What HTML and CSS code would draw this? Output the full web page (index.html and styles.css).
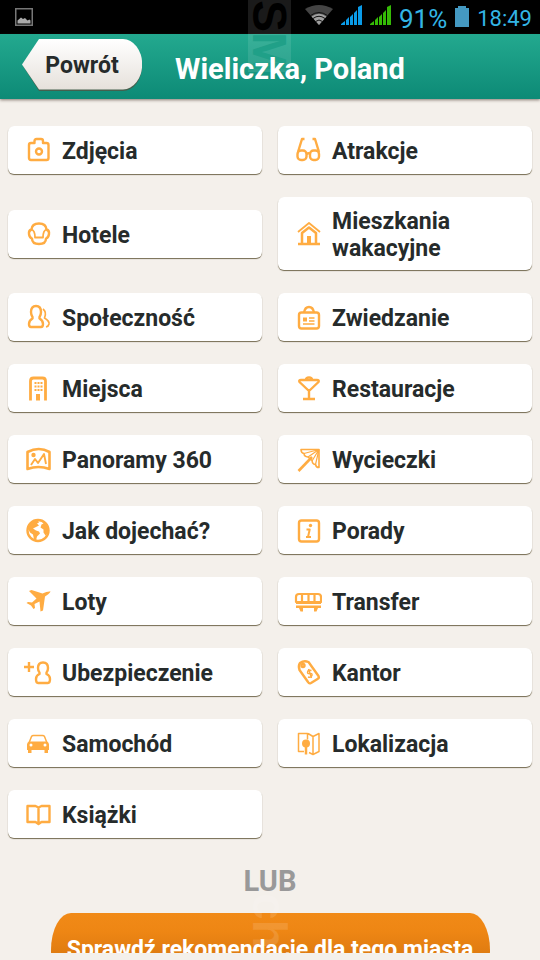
FILE: index.html
```html
<!DOCTYPE html>
<html lang="pl">
<head>
<meta charset="utf-8">
<meta name="viewport" content="width=device-width, initial-scale=1">
<title>Wieliczka, Poland</title>
<link rel="stylesheet" href="styles.css">
</head>
<body>
<div class="statusbar">
  <svg class="shot" width="18" height="18" viewBox="0 0 18 18"><rect x=".75" y=".75" width="16.500" height="16.500" fill="none" stroke="#777" stroke-width="1.500"/><path d="M2.500 15.500v-3l3.500-3 2 1.500 2-1 2.500 2.500 2-1 1 1v3z" fill="#aaa"/></svg>
  <div class="indicators">
    <svg class="wifi" width="28" height="20" viewBox="0 0 28 20"><path d="M0 4Q14-4 28 4L14 20z" fill="#444"/><path d="M6.500 11.500Q14 6 21.500 11.500L14 20z" fill="#a0a0a0"/><path d="M5.500 10.500Q14 4.500 22.500 10.500M8 13.500Q14 9 20 13.500M10.500 16.500Q14 13.500 17.500 16.500" fill="none" stroke="#111" stroke-width="1"/></svg>
    <svg class="signal blue" width="21" height="20" viewBox="0 0 21 20"><path d="M0 20v-1l4-3v4zM5 20v-5l3-3v8zM9 20v-8l3-3v11zM13 20V8l3-3v15zM17 20V2l4-2v20z"/></svg>
    <svg class="signal green" width="21" height="20" viewBox="0 0 21 20"><path d="M0 20v-1l4-3v4zM5 20v-5l3-3v8zM9 20v-8l3-3v11zM13 20V8l3-3v15zM17 20V2l4-2v20z"/></svg>
    <span class="percent">91%</span>
    <svg class="battery" width="14" height="21" viewBox="0 0 14 21"><path d="M0 2h3V0h8v2h3v19H0z" fill="#4499c2"/></svg>
    <span class="clock">18:49</span>
  </div>
</div>
<header class="topbar">
  <button class="back" type="button">
    <svg class="back-shape" viewBox="0 0 120 53" preserveAspectRatio="none" aria-hidden="true">
      <defs><linearGradient id="backfill" x2="0" y2="1"><stop offset="0" stop-color="#fff"/><stop offset="1" stop-color="#e6e1db"/></linearGradient></defs>
      <path d="M17 2h84a19 25 0 0 1 0 50H17L1 27z" fill="#45604e"/>
      <path d="M17 0h84a19 25 0 0 1 0 50.500H17L0 25.500z" fill="url(#backfill)"/>
    </svg>
    <span>Powrót</span>
  </button>
  <h1>Wieliczka, Poland</h1>
</header>
<main>
  <nav class="menu">
    <a class="card" href="#"><svg class="icon" viewBox="0 0 28 28"><path d="M7 7h3.500V5q0-2 2-2H17q2 0 2 2v2h3.500q2 0 2 2v13q0 2-2 2H7q-2 0-2-2V9q0-2 2-2z"/><circle cx="15" cy="15.500" r="3"/></svg>Zdjęcia</a>
    <a class="card" href="#"><svg class="icon" viewBox="0 0 28 28"><path d="M10.500 3H8L4 16M18.500 3H21l4 13"/><rect x="3.500" y="14.500" width="9" height="9.500" rx="3.500"/><rect x="16" y="14.500" width="9" height="9.500" rx="3.500"/><path d="M12.500 18q2-1.500 4 0"/></svg>Atrakcje</a>
    <a class="card" href="#"><svg class="icon" viewBox="0 0 28 28"><path d="M7.500 10.500Q8 4.500 15 4.500t7.500 6q3 1 2.500 4.500-.5 3.500-3 4.500 0 5.500-7 5.500t-7-5.500q-2.500-1-3-4.500-.5-3.500 2.500-4.500z"/><path d="M7.500 10.500q3.500 1 3.500 8h8q0-7 3.500-8" stroke-width="1.800"/></svg>Hotele</a>
    <a class="card" href="#"><svg class="icon" viewBox="0 0 28 28"><path d="M4 13L15 4l11 9" stroke-width="1.800"/><path d="M8 25V14l7-5.500 7 5.500v11M4 25h22" stroke-width="2.500"/><path d="M13 25v-8h4v8z" class="fill"/></svg>Mieszkania<br>wakacyjne</a>
    <a class="card" href="#"><svg class="icon" viewBox="0 0 28 28"><path d="M12 3q5 0 5 6 0 3-1.500 5v1.500q3.500 2 3.500 5.500 0 3-2 3H7q-2 0-2-3 0-3.500 3.500-5.500V14Q7 12 7 9q0-6 5-6z" stroke-width="2.400"/><path d="M19 6q4 3 1.500 9 5 3 4.500 6-.5 2.500-3 3" stroke-width="1.700"/></svg>Społeczność</a>
    <a class="card" href="#"><svg class="icon" viewBox="0 0 28 28"><rect x="5" y="9.500" width="20" height="16" rx="2.500"/><path d="M10 9.500q1-5.500 5-5.500t5 5.500"/><path d="M9 14.500h4v4H9z" class="fill"/><path d="M15 15h5.500M15 18h5.500M9 21h11.500" stroke-width="1.500"/></svg>Zwiedzanie</a>
    <a class="card" href="#"><svg class="icon" viewBox="0 0 28 28"><path d="M6.500 26.500V7q0-3 3-3h9q3 0 3 3v19.500" stroke-width="2.800"/><path d="M10.500 8h2v2h-2zm3 0h2v2h-2zm3 0h2v2h-2zm-6 3.500h2v2h-2zm3 0h2v2h-2zm3 0h2v2h-2zm-6 3.500h2v2h-2zm3 0h2v2h-2zm3 0h2v2h-2zM12 20h4v6.500h-4z" class="fill"/></svg>Miejsca</a>
    <a class="card" href="#"><svg class="icon" viewBox="0 0 28 28"><path d="M5.500 8L15 17l9.500-9q1-2-1.500-2H7Q4.500 6 5.500 8zM15 17v8M9 25h12"/><path d="M12 6q0-2.500 3-2.500T18 6"/></svg>Restauracje</a>
    <a class="card" href="#"><svg class="icon" viewBox="0 0 28 28"><path d="M3.500 7Q15 1 25.500 7v17q-11-4-22 0z" stroke-width="2.600"/><path d="M7 20l4-6 3 4 6-9 2 10" stroke-width="1.900"/><circle cx="9.500" cy="10" r="2.200" class="fill"/></svg>Panoramy 360</a>
    <a class="card" href="#"><svg class="icon" viewBox="0 0 28 28"><path d="M4.500 26L18 12" stroke-width="2.600"/><path d="M7 4.500h18v18q-3 0-3.500-3-3 0-3.500-4l-4-3.500q-4-.5-4-3.500Q7 8 7 4.500z" stroke-width="1.600"/><path d="M25 4.500L10 8.500M25 4.500L14 12M25 4.500L18 16M25 4.500l-3.500 15" stroke-width="1.200"/></svg>Wycieczki</a>
    <a class="card" href="#"><svg class="icon" viewBox="0 0 28 28"><circle cx="14" cy="14.500" r="10.500"/><path d="M5 8.500q4-4 9-4l1 2-2 1 2 2-4 2-2 1 3 2 3 1 1 2-3 3-1 4-2-1-1-5-3-2-2-4zM18 5.500l5 3 1.500 4-1 5-2 2-2-3v-3l-3-2 1-3 2-1z" class="fill"/></svg>Jak dojechać?</a>
    <a class="card" href="#"><svg class="icon" viewBox="0 0 28 28"><rect x="5" y="4.500" width="20" height="21" rx="2.500"/><circle cx="16.500" cy="9.500" r="1.700" class="fill"/><path d="M12.500 13.500h3.200l-1.700 7.500h3M12 21h2" stroke-width="2"/></svg>Porady</a>
    <a class="card" href="#"><svg class="icon" viewBox="0 0 28 28"><path d="M25.500 4.500q1.500-.8.500 1-1 1.500-5 4l-2 14-2.500 1-1-10-5 2.500.5 4-1.500 1-2.500-3.500L2.500 16l1.500-1 4 .5 4.500-4L5 4l2.500-1 11 3.500q4-2 7-2z" class="fill"/></svg>Loty</a>
    <a class="card" href="#"><svg class="icon" viewBox="0 0 28 28"><path d="M5 7h19q3 0 3 3v5H2v-5q0-3 3-3zM8 7v8M14.500 7v8M20.500 7v8" stroke-width="2.200"/><path d="M2 14h25v3H2zM2 18.500h25V21H2zM5 21h4v3.500H6.500zM20 21h4l-1.500 3.500H20z" class="fill"/></svg>Transfer</a>
    <a class="card" href="#"><svg class="icon" viewBox="0 0 28 28"><path d="M0 9h10M5 4v10M19 4.500q5 0 5 5.500 0 3-1.500 4.500V16q3.500 1.500 3.500 5 0 4-2 4H14q-2 0-2-4 0-3.500 3.500-5v-1.500Q14 13 14 10q0-5.500 5-5.500z"/></svg>Ubezpieczenie</a>
    <a class="card" href="#"><svg class="icon" viewBox="0 0 28 28"><path d="M6 5q4-3 8.500-1l10 14q1 2-1 3L17 25q-2 1-3-1L5.500 12Q4 8 6 5z" stroke-width="2.400"/><circle cx="9" cy="7.500" r="1.500"/><path d="M17.500 12.500q-4-1-4 2 0 1.500 2.500 1t2 2q-1 2.500-4 1.500M14.500 11l3 9" stroke-width="1.400"/></svg>Kantor</a>
    <a class="card" href="#"><svg class="icon" viewBox="0 0 28 28"><path d="M5 14L7.500 7.500q.5-1 2-1h9q1.500 0 2 1L23 14" stroke-width="1.500"/><path fill-rule="evenodd" d="M5 12.500h18q2 1 2 3V21h-1v3h-3.500v-3h-13v3H4v-3H3v-5.500q0-2 2-3zM5.500 16a1.500 1.500 0 1 0 3 0 1.500 1.500 0 0 0-3 0zm14 0a1.500 1.500 0 1 0 3 0 1.500 1.500 0 0 0-3 0z" class="fill"/></svg>Samochód</a>
    <a class="card" href="#"><svg class="icon" viewBox="0 0 28 28"><path d="M10 22.500H4.500V4.500h9v6M14 4.500l5 3 6-3v18l-6 3-4-2M19 7.500v18" stroke-width="1.500"/><circle cx="12" cy="14.500" r="4" class="fill"/><path d="M12 17v8.500" stroke-width="2.500"/></svg>Lokalizacja</a>
    <a class="card" href="#"><svg class="icon" viewBox="0 0 28 28"><path d="M3.500 6h8l3 1.500 3-1.500h8v16h-8l-3 2-3-2h-8zM14.500 7v16"/></svg>Książki</a>
  </nav>
  <p class="or">LUB</p>
  <button class="recommend" type="button">Sprawdź rekomendacje dla tego miasta</button>
</main>
<div class="mark mark-top" aria-hidden="true"><span class="mark-s">S</span><span class="mark-m">M</span></div>
<div class="mark mark-bottom" aria-hidden="true">ch</div>
</body>
</html>
```
FILE: styles.css
```css
* { box-sizing: border-box; }

body {
  margin: 0;
  height: 100vh;
  padding-bottom: 7px;
  display: flex;
  flex-direction: column;
  position: relative;
  overflow: hidden;
  background: #f4f0eb;
  color: #262b2b;
  font-family: Roboto, "Liberation Sans", sans-serif;
}

.statusbar {
  height: 34px;
  flex: none;
  padding: 0 8px 0 15px;
  display: flex;
  align-items: center;
  justify-content: space-between;
  background: #000;
  color: #33b5e5;
}
.indicators { display: flex; align-items: center; gap: 8px; }
.wifi, .signal { margin-bottom: 4px; }
.blue { fill: #0a9be8; }
.green { fill: #35bb06; }
.percent { font-size: 26px; line-height: 34px; padding-top: 4px; }
.battery { margin-bottom: 1px; }
.clock { font-size: 22px; line-height: 34px; padding-top: 3px; }

.topbar {
  height: 65px;
  flex: none;
  padding: 0 22px;
  display: flex;
  align-items: center;
  gap: 33px;
  background: linear-gradient(#23a98f, #0d8a76);
  box-shadow: 0 1px 3px rgba(60, 40, 30, .6);
}
.back {
  position: relative;
  width: 120px;
  height: 53px;
  margin-bottom: 2px;
  padding: 0;
  border: 0;
  background: none;
  color: inherit;
  font: 700 23px/53px Roboto, sans-serif;
  z-index: 0;
}
.back-shape { position: absolute; inset: 0; width: 100%; height: 100%; z-index: -1; }
h1 {
  position: relative;
  z-index: 2;
  margin: 0;
  padding-top: 4px;
  color: #fff;
  font-size: 29px;
  line-height: 36px;
  font-weight: 700;
}

main {
  flex: 1;
  min-height: 0;
  padding: 27px 8px 0;
  overflow: hidden;
}
.menu {
  display: grid;
  grid-template-columns: 1fr 1fr;
  gap: 23px 16px;
  align-items: center;
}
.card {
  display: flex;
  align-items: center;
  gap: 10px;
  min-height: 48px;
  padding: 11px 16px 8px;
  border-radius: 6px;
  background: #fff;
  box-shadow: 0 1px 1px #746a50;
  color: inherit;
  font-size: 23px;
  line-height: 27px;
  font-weight: 700;
  text-decoration: none;
}
.icon {
  width: 28px;
  height: 28px;
  margin: -2px 0 2px;
  flex: none;
  fill: none;
  stroke: #ffac42;
  stroke-width: 2.4;
  stroke-linejoin: round;
}
.icon .fill { fill: #ffac42; stroke: none; }

.or {
  margin: 25px 0 14px;
  color: #999;
  font-size: 29px;
  line-height: 36px;
  font-weight: 700;
  text-align: center;
}
.recommend {
  display: block;
  width: calc(100% - 85px);
  height: 74px;
  margin: 0 auto;
  padding: 0;
  border: 0;
  border-radius: 20px / 37px;
  background: linear-gradient(#f18a17, #ee8614 25%, #c96c0c);
  color: #fff;
  font: 700 23px/74px Roboto, sans-serif;
  white-space: nowrap;
}

.mark {
  position: absolute;
  z-index: 1;
  left: 248px;
  width: 43px;
  writing-mode: vertical-rl;
  font: 700 48px/43px "Liberation Sans", sans-serif;
  pointer-events: none;
}
.mark-top { top: 0; background: rgba(255, 255, 255, .1); }
.mark-s { color: #000; }
.mark-m { color: #20a088; }
.mark-bottom { bottom: 11px; color: rgba(255, 255, 255, .12); }
```
